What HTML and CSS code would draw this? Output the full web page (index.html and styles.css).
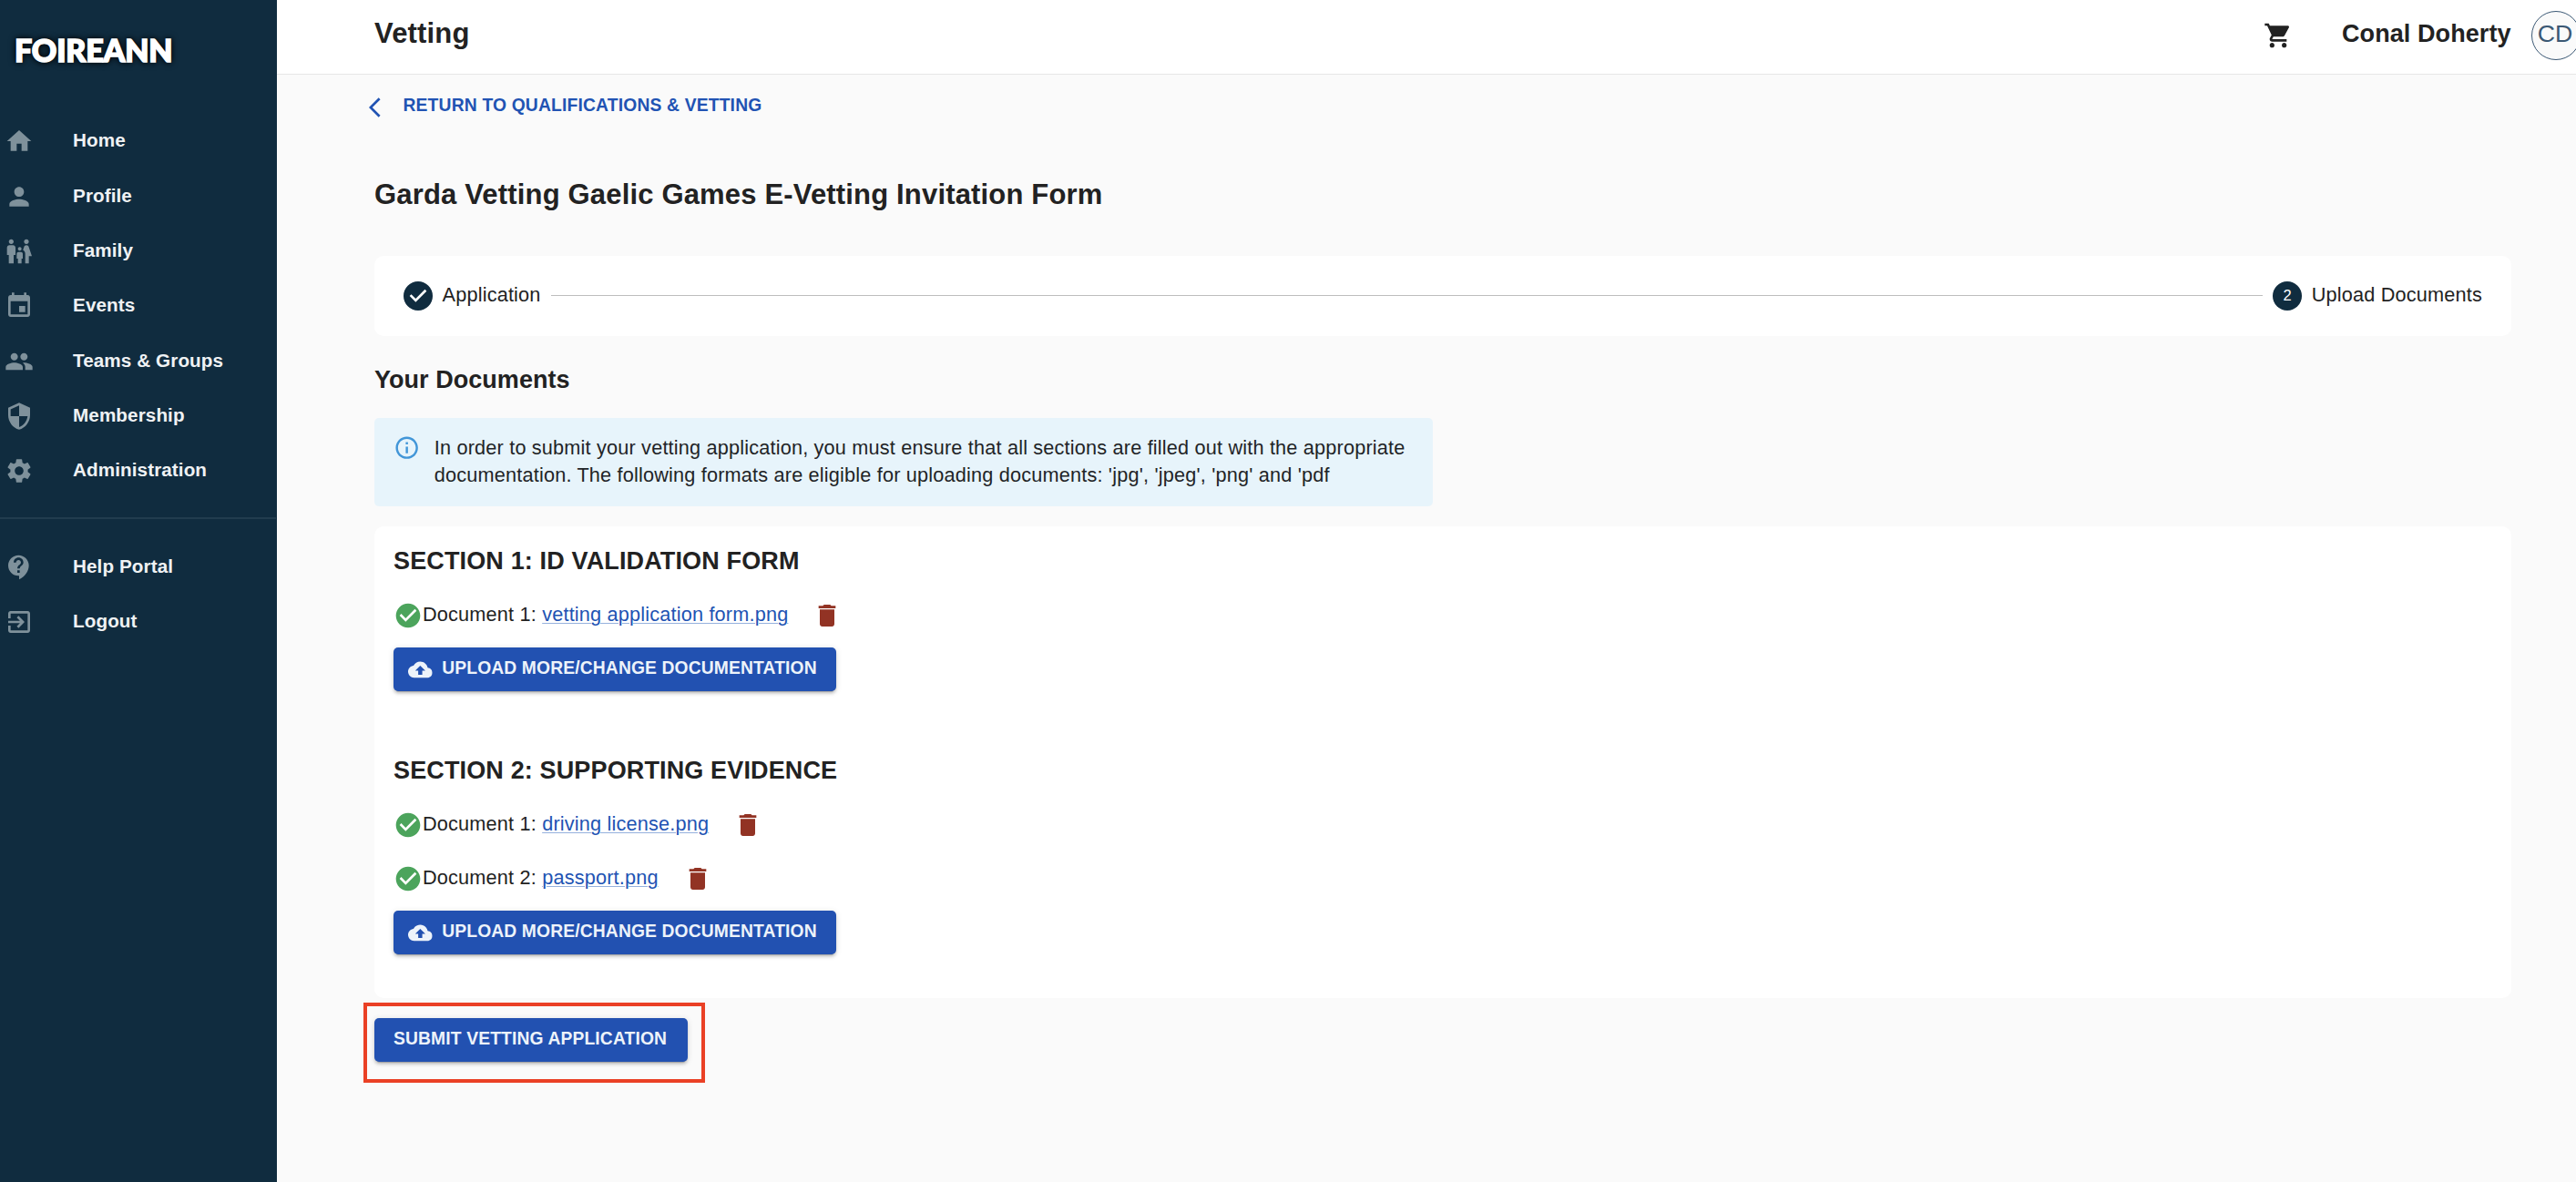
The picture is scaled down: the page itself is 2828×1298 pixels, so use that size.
FILE: index.html
```html
<!DOCTYPE html>
<html lang="en">
<head>
    <meta charset="UTF-8">
    <meta name="viewport" content="width=device-width, initial-scale=1.0">
    <title>Vetting</title>
    <link rel="stylesheet" href="styles.css">
</head>
<body>

<!-- shared icons -->
<svg class="sprite" width="0" height="0">
    <symbol id="check" viewBox="0 0 24 24"><path d="M12 2C6.48 2 2 6.48 2 12s4.48 10 10 10 10-4.48 10-10S17.52 2 12 2zm-2 15l-5-5 1.41-1.41L10 14.17l7.59-7.59L19 8l-9 9z"/></symbol>
    <symbol id="trash" viewBox="0 0 24 24"><path d="M6 19c0 1.1.9 2 2 2h8c1.1 0 2-.9 2-2V7H6v12zM19 4h-3.5l-1-1h-5l-1 1H5v2h14V4z"/></symbol>
    <symbol id="cloud" viewBox="0 0 24 24"><path d="M19.35 10.04C18.67 6.59 15.64 4 12 4 9.11 4 6.6 5.64 5.35 8.04 2.34 8.36 0 10.91 0 14c0 3.31 2.69 6 6 6h13c2.76 0 5-2.24 5-5 0-2.64-2.05-4.78-4.65-4.96zM14 13v4h-4v-4H7l5-5 5 5h-3z"/></symbol>
</svg>

<aside class="sidebar">
    <div class="logo">FOIREANN</div>
    <ul class="menu">
        <li class="menuItem">
            <svg viewBox="0 0 24 24"><path d="M10 20v-6h4v6h5v-8h3L12 3 2 12h3v8z"/></svg>
            <span>Home</span>
        </li>
        <li class="menuItem">
            <svg viewBox="0 0 24 24"><path d="M12 12c2.21 0 4-1.79 4-4s-1.79-4-4-4-4 1.79-4 4 1.79 4 4 4zm0 2c-2.67 0-8 1.34-8 4v2h16v-2c0-2.66-5.33-4-8-4z"/></svg>
            <span>Profile</span>
        </li>
        <li class="menuItem">
            <svg viewBox="0 0 24 24"><path d="M16 4c0-1.11.89-2 2-2s2 .89 2 2-.89 2-2 2-2-.89-2-2zm4 18v-6h2.5l-2.54-7.63C19.68 7.55 18.92 7 18.06 7h-.12c-.86 0-1.63.55-1.9 1.37l-.86 2.58c1.08.6 1.82 1.73 1.82 3.05v8h3zm-7.5-10.5c.83 0 1.5-.67 1.5-1.5s-.67-1.5-1.5-1.5S11 9.17 11 10s.67 1.5 1.5 1.5zM5.5 6c1.11 0 2-.89 2-2s-.89-2-2-2-2 .89-2 2 .89 2 2 2zm2 16v-7H9V9c0-1.1-.9-2-2-2H4c-1.1 0-2 .9-2 2v6h1.5v7h4zm6.5 0v-4h1v-4c0-.82-.68-1.5-1.5-1.5h-2c-.82 0-1.5.68-1.5 1.5v4h1v4h3z"/></svg>
            <span>Family</span>
        </li>
        <li class="menuItem">
            <svg viewBox="0 0 24 24"><path d="M17 12h-5v5h5v-5zM16 1v2H8V1H6v2H5c-1.11 0-1.99.9-1.99 2L3 19c0 1.1.89 2 2 2h14c1.1 0 2-.9 2-2V5c0-1.1-.9-2-2-2h-1V1h-2zm3 18H5V8h14v11z"/></svg>
            <span>Events</span>
        </li>
        <li class="menuItem">
            <svg viewBox="0 0 24 24"><path d="M16 11c1.66 0 2.99-1.34 2.99-3S17.66 5 16 5s-3 1.34-3 3 1.34 3 3 3zm-8 0c1.66 0 2.99-1.34 2.99-3S9.66 5 8 5 5 6.34 5 8s1.34 3 3 3zm0 2c-2.33 0-7 1.17-7 3.5V19h14v-2.5c0-2.33-4.67-3.5-7-3.5zm8 0c-.29 0-.62.02-.97.05 1.16.84 1.97 1.97 1.97 3.45V19h6v-2.5c0-2.33-4.67-3.5-7-3.5z"/></svg>
            <span>Teams &amp; Groups</span>
        </li>
        <li class="menuItem">
            <svg viewBox="0 0 24 24"><path d="M12 1L3 5v6c0 5.55 3.84 10.74 9 12 5.16-1.26 9-6.45 9-12V5l-9-4zm0 10.99h7c-.53 4.12-3.28 7.79-7 8.94V12H5V6.3l7-3.11v8.8z"/></svg>
            <span>Membership</span>
        </li>
        <li class="menuItem">
            <svg viewBox="0 0 24 24"><path d="M19.14 12.94c.04-.3.06-.61.06-.94 0-.32-.02-.64-.07-.94l2.03-1.58c.18-.14.23-.41.12-.61l-1.92-3.32c-.12-.22-.37-.29-.59-.22l-2.39.96c-.5-.38-1.03-.7-1.62-.94l-.36-2.54c-.04-.24-.24-.41-.48-.41h-3.84c-.24 0-.43.17-.47.41l-.36 2.54c-.59.24-1.13.57-1.62.94l-2.39-.96c-.22-.08-.47 0-.59.22L2.74 8.87c-.12.21-.08.47.12.61l2.03 1.58c-.05.3-.09.63-.09.94s.02.64.07.94l-2.03 1.58c-.18.14-.23.41-.12.61l1.92 3.32c.12.22.37.29.59.22l2.39-.96c.5.38 1.03.7 1.62.94l.36 2.54c.05.24.24.41.48.41h3.84c.24 0 .44-.17.47-.41l.36-2.54c.59-.24 1.13-.56 1.62-.94l2.39.96c.22.08.47 0 .59-.22l1.92-3.32c.12-.22.07-.47-.12-.61l-2.01-1.58zM12 15.6c-1.98 0-3.6-1.62-3.6-3.6s1.62-3.6 3.6-3.6 3.6 1.62 3.6 3.6-1.62 3.6-3.6 3.6z"/></svg>
            <span>Administration</span>
        </li>
    </ul>
    <ul class="menu menuBottom">
        <li class="menuItem">
            <svg viewBox="0 0 24 24"><path d="M11.5 2C6.81 2 3 5.81 3 10.5S6.81 19 11.5 19h.5v3c4.86-2.34 8-7 8-11.5C20 5.81 16.19 2 11.5 2zm1 14.5h-2v-2h2v2zm0-3.5h-2c0-3.25 3-3 3-5 0-1.1-.9-2-2-2s-2 .9-2 2h-2c0-2.21 1.79-4 4-4s4 1.79 4 4c0 2.5-3 2.75-3 5z"/></svg>
            <span>Help Portal</span>
        </li>
        <li class="menuItem">
            <svg viewBox="0 0 24 24"><path d="M10.09 15.59L11.5 17l5-5-5-5-1.41 1.41L12.67 11H3v2h9.67l-2.58 2.59zM19 3H5c-1.11 0-2 .9-2 2v4h2V5h14v14H5v-4H3v4c0 1.1.89 2 2 2h14c1.1 0 2-.9 2-2V5c0-1.1-.9-2-2-2z"/></svg>
            <span>Logout</span>
        </li>
    </ul>
</aside>

<div class="page">
    <header class="topbar">
        <div class="topbarTitle">Vetting</div>
        <svg class="cart" viewBox="0 0 24 24"><path d="M7 18c-1.1 0-1.99.9-1.99 2S5.9 22 7 22s2-.9 2-2-.9-2-2-2zM1 2v2h2l3.6 7.59-1.35 2.45c-.16.28-.25.61-.25.96 0 1.1.9 2 2 2h12v-2H7.42c-.14 0-.25-.11-.25-.25l.03-.12.9-1.63h7.45c.75 0 1.41-.41 1.75-1.03l3.58-6.49c.08-.14.12-.31.12-.48 0-.55-.45-1-1-1H5.21l-.94-2H1zm16 16c-1.1 0-1.99.9-1.99 2s.89 2 1.99 2 2-.9 2-2-.9-2-2-2z"/></svg>
        <div class="userName">Conal Doherty</div>
        <div class="avatar"><span>CD</span></div>
    </header>

    <main class="content">
        <a class="backLink">
            <svg viewBox="0 0 13 24"><path d="M11.67 3.87L9.9 2.1 0 12l9.9 9.9 1.77-1.77L3.54 12z"/></svg>
            <span>RETURN TO QUALIFICATIONS &amp; VETTING</span>
        </a>

        <h1 class="formTitle">Garda Vetting Gaelic Games E-Vetting Invitation Form</h1>

        <div class="stepper">
            <svg class="stepIcon" viewBox="0 0 24 24"><path d="M12 0a12 12 0 1 0 0 24 12 12 0 0 0 0-24zm-2 17l-5-5 1.4-1.4 3.6 3.6 7.6-7.6L19 8l-9 9z"/></svg>
            <span class="stepLabel">Application</span>
            <div class="stepLine"></div>
            <div class="stepNumber"><span>2</span></div>
            <span class="stepLabel">Upload Documents</span>
        </div>

        <h2 class="subTitle">Your Documents</h2>

        <div class="info">
            <svg viewBox="0 0 24 24"><path d="M11 7h2v2h-2zM11 11h2v6h-2zM12 2C6.48 2 2 6.48 2 12s4.48 10 10 10 10-4.48 10-10S17.52 2 12 2zm0 18c-4.41 0-8-3.59-8-8s3.59-8 8-8 8 3.59 8 8-3.59 8-8 8z"/></svg>
            <p>In order to submit your vetting application, you must ensure that all sections are filled out with the appropriate<br>documentation. The following formats are eligible for uploading documents: 'jpg', 'jpeg', 'png' and 'pdf</p>
        </div>

        <div class="documents">
            <section class="section">
                <h3>SECTION 1: ID VALIDATION FORM</h3>
                <div class="docRow">
                    <svg class="ok"><use href="#check"/></svg>
                    <span class="docText">Document 1: <a>vetting application form.png</a></span>
                    <svg class="trash"><use href="#trash"/></svg>
                </div>
                <button class="btn uploadBtn"><svg><use href="#cloud"/></svg><span>UPLOAD MORE/CHANGE DOCUMENTATION</span></button>
            </section>
            <section class="section">
                <h3>SECTION 2: SUPPORTING EVIDENCE</h3>
                <div class="docRow">
                    <svg class="ok"><use href="#check"/></svg>
                    <span class="docText">Document 1: <a>driving license.png</a></span>
                    <svg class="trash"><use href="#trash"/></svg>
                </div>
                <div class="docRow">
                    <svg class="ok"><use href="#check"/></svg>
                    <span class="docText">Document 2: <a>passport.png</a></span>
                    <svg class="trash"><use href="#trash"/></svg>
                </div>
                <button class="btn uploadBtn"><svg><use href="#cloud"/></svg><span>UPLOAD MORE/CHANGE DOCUMENTATION</span></button>
            </section>
        </div>

        <div class="submitArea">
            <button class="btn submitBtn"><span>SUBMIT VETTING APPLICATION</span></button>
            <div class="highlight"></div>
        </div>
    </main>
</div>

</body>
</html>
```

FILE: styles.css
```css
* {
    box-sizing: border-box;
}

body {
    display: flex;
    margin: 0;
    height: 100vh;
    overflow: hidden;
    font-family: "Liberation Sans", Arial, sans-serif;
    font-size: 21.7px;
    letter-spacing: 0.18px;
    color: #222;
    background: #fafafa;
}

h1, h2, h3, p, ul {
    margin: 0;
    padding: 0;
}

svg {
    display: block;
    flex-shrink: 0;
    fill: currentColor;
}

.sprite {
    position: absolute;
}

/* Sidebar */
.sidebar {
    width: 304px;
    flex-shrink: 0;
    background: #102c3f;
}

.logo {
    height: 125px;
    padding: 33px 0 0 16px;
    font: 900 34px/44px Lato, sans-serif;
    letter-spacing: -0.2px;
    color: #fff;
    -webkit-text-stroke: 1.6px #fff;
    text-shadow: 0 0 5px #000, 0 0 8px #000;
}

.menu {
    list-style: none;
}

.menuItem {
    display: flex;
    align-items: center;
    height: 60.35px;
    padding-left: 5px;
    font-size: 20.7px;
    font-weight: bold;
    letter-spacing: 0.08px;
    color: #eff2f4;
}

.menuItem svg {
    width: 32px;
    height: 32px;
    margin-right: 43px;
    color: #7f919b;
}

.menuItem span {
    padding-bottom: 2px;
}

.menuBottom {
    margin: 21px 1px 0 0;
    padding-top: 22px;
    border-top: 2px solid #213c4e;
}

/* Header */
.page {
    flex-grow: 1;
    min-width: 0;
}

.topbar {
    display: flex;
    align-items: center;
    height: 82px;
    padding: 0 0 3px 107px;
    background: #fff;
    border-bottom: 1px solid #e6e6e6;
}

.topbarTitle {
    flex-grow: 1;
    padding-bottom: 4px;
    font-size: 31px;
    font-weight: bold;
    letter-spacing: 0.17px;
}

.cart {
    width: 32px;
    height: 32px;
    margin-right: 54px;
}

.userName {
    width: 208px;
    padding-bottom: 4px;
    font-size: 27px;
    font-weight: bold;
    letter-spacing: 0.08px;
}

.avatar {
    display: flex;
    align-items: center;
    justify-content: center;
    flex-shrink: 0;
    width: 54px;
    height: 54px;
    margin-right: -5px;
    padding: 0 2px 3px 0;
    border: 1px solid #3b5874;
    border-radius: 50%;
    background: #fafafa;
    font-size: 26.7px;
    letter-spacing: 0;
    color: #3b5874;
}

/* Content */
.content {
    padding: 20px 71px 0 107px;
}

.backLink {
    display: flex;
    align-items: center;
    height: 32px;
    margin-left: -6px;
    font-size: 19.3px;
    font-weight: bold;
    letter-spacing: 0.17px;
    color: #2153b3;
}

.backLink svg {
    width: 14px;
    height: 26px;
    margin-right: 23.5px;
}

.backLink span {
    padding-bottom: 4px;
}

.formTitle {
    margin-top: 59px;
    font-size: 31px;
    line-height: 41px;
    letter-spacing: 0.17px;
}

.stepper {
    display: flex;
    align-items: center;
    height: 88px;
    margin-top: 47px;
    padding: 0 32px;
    border-radius: 10px;
    background: #fff;
}

.stepIcon {
    width: 32px;
    height: 32px;
    color: #102c3f;
}

.stepLabel {
    padding: 0 0 3px 10.5px;
}

.stepLine {
    flex-grow: 1;
    height: 1px;
    margin: 0 11px 1px;
    background: #bdbdbd;
}

.stepNumber {
    display: flex;
    align-items: center;
    justify-content: center;
    width: 32px;
    height: 32px;
    padding-bottom: 1px;
    border-radius: 50%;
    background: #102c3f;
    color: #fff;
    font-size: 16.5px;
    letter-spacing: 0;
}

.subTitle {
    margin-top: 30px;
    font-size: 27px;
    line-height: 36px;
    letter-spacing: 0.04px;
}

.info {
    display: flex;
    width: 1162px;
    height: 97px;
    margin-top: 24px;
    padding: 17.5px 20px 0 21px;
    border-radius: 5px;
    background: #e7f4fb;
    color: #1f2427;
    line-height: 30.3px;
    white-space: nowrap;
}

.info svg {
    width: 29.3px;
    height: 29.3px;
    margin-right: 15.5px;
    color: #4296d8;
}

.documents {
    height: 518px;
    margin-top: 22px;
    padding: 20px 21px 0;
    border-radius: 10px;
    background: #fff;
}

.section {
    height: 230px;
}

.section h3 {
    margin-bottom: 12.5px;
    font-size: 27px;
    line-height: 36px;
    letter-spacing: 0.14px;
}

.docRow {
    display: flex;
    align-items: center;
    height: 59px;
}

.docRow svg {
    width: 32px;
    height: 32px;
}

.ok {
    color: #4ca45c;
}

.trash {
    margin-left: 27px;
    color: #923324;
}

.docText {
    padding-bottom: 3px;
}

.docText a {
    color: #2153b3;
    text-decoration: underline 1px #96b1dd;
    text-underline-offset: 2px;
}

.btn {
    display: flex;
    align-items: center;
    height: 48px;
    padding: 0 21px 3px;
    border: none;
    border-radius: 5px;
    background: #2251b1;
    box-shadow: 0 4px 1px -3px rgba(0, 0, 0, 0.2), 0 3px 3px rgba(0, 0, 0, 0.14), 0 1px 7px rgba(0, 0, 0, 0.12);
    color: #edf3fa;
    font: bold 19.3px "Liberation Sans", Arial, sans-serif;
    letter-spacing: 0.13px;
    white-space: nowrap;
}

.uploadBtn {
    width: 486px;
    margin-top: 5.5px;
    padding-left: 16px;
}

.uploadBtn svg {
    width: 26.7px;
    height: 26.7px;
    margin: 3px 10.5px 0 0;
}

/* Submit button with the marker around it */
.submitArea {
    position: relative;
    width: 344px;
    margin-top: 22px;
}

.submitBtn {
    width: 344px;
}

.highlight {
    position: absolute;
    top: -17px;
    right: -19px;
    bottom: -23px;
    left: -12px;
    border: 4px solid #ea4025;
}
```
